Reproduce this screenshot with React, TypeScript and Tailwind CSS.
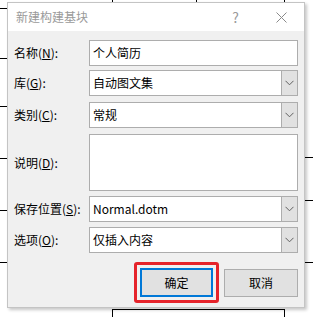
import React from 'react';

const font = { fontFamily: '"Noto Sans CJK SC", "Noto Sans", sans-serif' };

function Chevron() {
  return (
    <svg width="9" height="6" viewBox="0 0 9 6" fill="none">
      <path d="M0.5 0.8 L4.5 4.8 L8.5 0.8" stroke="#606060" strokeWidth="1" />
    </svg>
  );
}

function Combo({ value, className = '' }: { value: string; className?: string }) {
  return (
    <div className={'flex h-[26px] bg-white border border-[#adadad] ' + className}>
      <div className="flex-1 flex items-center pl-[3px] text-[12px] text-black">{value}</div>
      <div className="w-[16px] flex items-center justify-center bg-[#e1e1e1] border-l border-[#adadad]">
        <Chevron />
      </div>
    </div>
  );
}

function Label({ text, hot, className = '' }: { text: string; hot: string; className?: string }) {
  return (
    <div className={'flex items-center text-[12px] text-black ' + className}>
      {text}(<u>{hot}</u>):
    </div>
  );
}

export default function App() {
  return (
    <div className="relative w-[313px] h-[317px] bg-white overflow-hidden pt-[2px] pl-[7px]" style={font}>
      {/* document table behind the dialog */}
      <svg className="absolute inset-0" width="313" height="317" viewBox="0 0 313 317">
        <g stroke="#000" strokeWidth="1" shapeRendering="crispEdges">
          <line x1="0" y1="8.5" x2="8" y2="8.5" />
          <line x1="0" y1="58.5" x2="8" y2="58.5" />
          <line x1="0" y1="106.5" x2="8" y2="106.5" />
          <line x1="0" y1="158.5" x2="8" y2="158.5" />
          <line x1="0" y1="210.5" x2="8" y2="210.5" />
          <line x1="0" y1="262.5" x2="8" y2="262.5" />
          <line x1="305" y1="157.5" x2="313" y2="157.5" />
          <line x1="305" y1="200.5" x2="313" y2="200.5" />
          <line x1="305" y1="262.5" x2="313" y2="262.5" />
          <line x1="112.5" y1="0" x2="112.5" y2="3" />
          <line x1="196.5" y1="0" x2="196.5" y2="3" />
          <line x1="284.5" y1="0" x2="284.5" y2="3" />
          <line x1="112" y1="309.5" x2="285" y2="309.5" />
          <line x1="112.5" y1="309" x2="112.5" y2="317" />
          <line x1="284.5" y1="309" x2="284.5" y2="317" />
        </g>
      </svg>

      <div className="relative flex flex-col w-[298px] h-[306px] border border-[#c4c4c4] shadow-[2px_2px_3px_rgba(0,0,0,0.22)]">
        <div className="h-[28px] bg-white flex items-center pl-[8px] pr-[17px]">
          <span className="text-[12px] text-[#9a9a9a] flex-1">新建构建基块</span>
          <span className="text-[14px] text-[#9a9a9a] mr-[37px]">?</span>
          <svg width="11" height="11" viewBox="0 0 11 11">
            <path d="M0.5 0.5 L10.5 10.5 M10.5 0.5 L0.5 10.5" stroke="#8a8a8a" strokeWidth="1" />
          </svg>
        </div>

        <div className="flex-1 bg-[#f0f0f0] pl-[6px] pr-[6px] pt-[9px]">
          <div className="grid grid-cols-[75px_1fr]">
            <Label text="名称" hot="N" className="h-[26px]" />
            <div className="h-[26px] bg-white border border-[#adadad] flex items-center pl-[3px] text-[12px] text-black">
              个人简历
            </div>

            <Label text="库" hot="G" className="h-[26px] mt-[4px]" />
            <Combo value="自动图文集" className="mt-[4px]" />

            <Label text="类别" hot="C" className="h-[26px] mt-[6px]" />
            <Combo value="常规" className="mt-[6px]" />

            <Label text="说明" hot="D" className="h-[57px] mt-[6px]" />
            <div className="h-[57px] mt-[6px] bg-white border border-[#adadad]" />

            <Label text="保存位置" hot="S" className="h-[26px] mt-[5px]" />
            <Combo value="Normal.dotm" className="mt-[5px]" />

            <Label text="选项" hot="O" className="h-[26px] mt-[5px]" />
            <Combo value="仅插入内容" className="mt-[5px]" />
          </div>

          <div className="flex justify-end items-center mt-[9px] gap-[5px]">
            <div className="border-[3px] border-[#e5232a] rounded-[3px] p-[3px]">
              <div className="w-[73px] h-[29px] bg-[#e1e1e1] border-2 border-[#0078d7] flex items-center justify-center text-[12px] text-black">
                确定
              </div>
            </div>
            <div className="w-[74px] h-[28px] bg-[#e1e1e1] border border-[#adadad] flex items-center justify-center text-[12px] text-black">
              取消
            </div>
          </div>
        </div>
      </div>
    </div>
  );
}
